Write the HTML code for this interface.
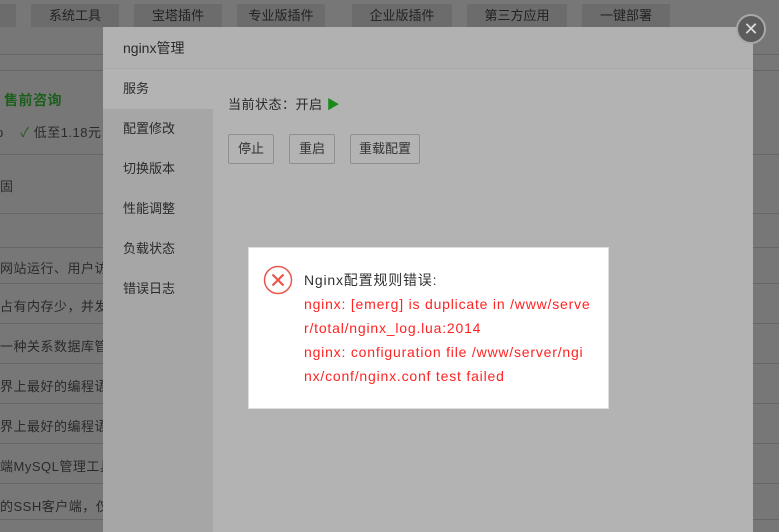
<!DOCTYPE html>
<html><head><meta charset="utf-8"><style>
*{margin:0;padding:0;box-sizing:border-box}
body{width:779px;height:532px;overflow:hidden;background:#777;font-family:"Liberation Sans","Noto Sans CJK SC",sans-serif;position:relative;color:#333}
.tb{position:absolute;top:4px;height:23px;background:#6c6c6c;color:#222;font-size:13px;line-height:23px;text-align:center}
.ln{position:absolute;left:0;width:779px;height:1px;background:#666}
.row{position:absolute;left:0;font-size:13px;color:#2a2a2a;white-space:nowrap;letter-spacing:0.5px}
.modal{position:absolute;left:103px;top:27px;width:650px;height:505px;background:#b3b3b3}
.mh{height:42px;border-bottom:1px solid #a9a9a9;font-size:14px;line-height:42px;padding-left:20px;color:#2a2a2a;background:#b1b1b1}
.side{position:absolute;left:0;top:42px;width:110px;height:463px;background:#a6a6a6}
.side div{height:40px;line-height:40px;padding-left:20px;font-size:13px;color:#2a2a2a}
.side div.a{background:#b3b3b3}
.btn{position:absolute;top:107px;height:30px;border:1px solid #8f8f8f;border-radius:2px;font-size:13px;line-height:28px;text-align:center;color:#333}
.err{position:absolute;left:248px;top:247px;width:361px;height:162px;background:#fff;border:1px solid #ddd}
.err p{position:absolute;left:55px;font-size:14px;line-height:24px;color:#f22;white-space:nowrap;letter-spacing:0.8px}
</style></head><body>
<div class="tb" style="left:0;width:16px"></div>
<div class="tb" style="left:31px;width:88px">系统工具</div>
<div class="tb" style="left:134px;width:88px">宝塔插件</div>
<div class="tb" style="left:237px;width:88px">专业版插件</div>
<div class="tb" style="left:352px;width:100px">企业版插件</div>
<div class="tb" style="left:467px;width:100px">第三方应用</div>
<div class="tb" style="left:582px;width:88px">一键部署</div>
<div class="ln" style="top:54px"></div>
<div class="ln" style="top:70px"></div>
<div class="row" style="top:90px;left:4px;color:#1c5e1c;font-weight:bold;font-size:14px">售前咨询</div>
<div class="row" style="top:122px;left:-4px">p&nbsp;&nbsp;&nbsp;&nbsp;<span style="color:#1c5e1c">✓</span> 低至1.18元</div>
<div class="ln" style="top:154px"></div>
<div class="row" style="top:176px">固</div>
<div class="ln" style="top:213px"></div>
<div class="ln" style="top:247px"></div>
<div class="row" style="top:258px">网站运行、用户访问</div>
<div class="ln" style="top:283px"></div>
<div class="row" style="top:296px">占有内存少，并发能</div>
<div class="ln" style="top:323px"></div>
<div class="row" style="top:336px">一种关系数据库管理</div>
<div class="ln" style="top:363px"></div>
<div class="row" style="top:376px">界上最好的编程语言</div>
<div class="ln" style="top:403px"></div>
<div class="row" style="top:416px">界上最好的编程语言</div>
<div class="ln" style="top:443px"></div>
<div class="row" style="top:456px">端MySQL管理工具</div>
<div class="ln" style="top:483px"></div>
<div class="row" style="top:496px">的SSH客户端，仅用于</div>
<div class="ln" style="top:519px"></div>
<div class="modal">
<div class="mh">nginx管理</div>
<div class="side"><div class="a">服务</div><div>配置修改</div><div>切换版本</div><div>性能调整</div><div>负载状态</div><div>错误日志</div></div>
<div style="position:absolute;left:125px;top:67px;font-size:13px;color:#2a2a2a;letter-spacing:0.5px">当前状态：开启 <span style="color:#1b8a1b">▶</span></div>
<div class="btn" style="left:125px;width:46px">停止</div>
<div class="btn" style="left:186px;width:46px">重启</div>
<div class="btn" style="left:247px;width:70px">重载配置</div>
</div>
<div style="position:absolute;left:736px;top:14px;width:30px;height:30px;border-radius:50%;background:#5c5c5c;border:2px solid #a8a8a8;color:#ddd;font-size:18px;line-height:26px;text-align:center">✕</div>
<div class="err">
<svg style="position:absolute;left:14px;top:17px" width="30" height="30" viewBox="0 0 30 30"><circle cx="15" cy="15" r="13.5" fill="none" stroke="#e8574b" stroke-width="1.5"/><path d="M9.5 9.5L20.5 20.5M20.5 9.5L9.5 20.5" stroke="#e8574b" stroke-width="2.2"/></svg>
<p style="top:20px;color:#333">Nginx配置规则错误:</p>
<p style="top:44px">nginx: [emerg] is duplicate in /www/serve</p>
<p style="top:68px">r/total/nginx_log.lua:2014</p>
<p style="top:92px">nginx: configuration file /www/server/ngi</p>
<p style="top:116px">nx/conf/nginx.conf test failed</p>
</div>
</body></html>
